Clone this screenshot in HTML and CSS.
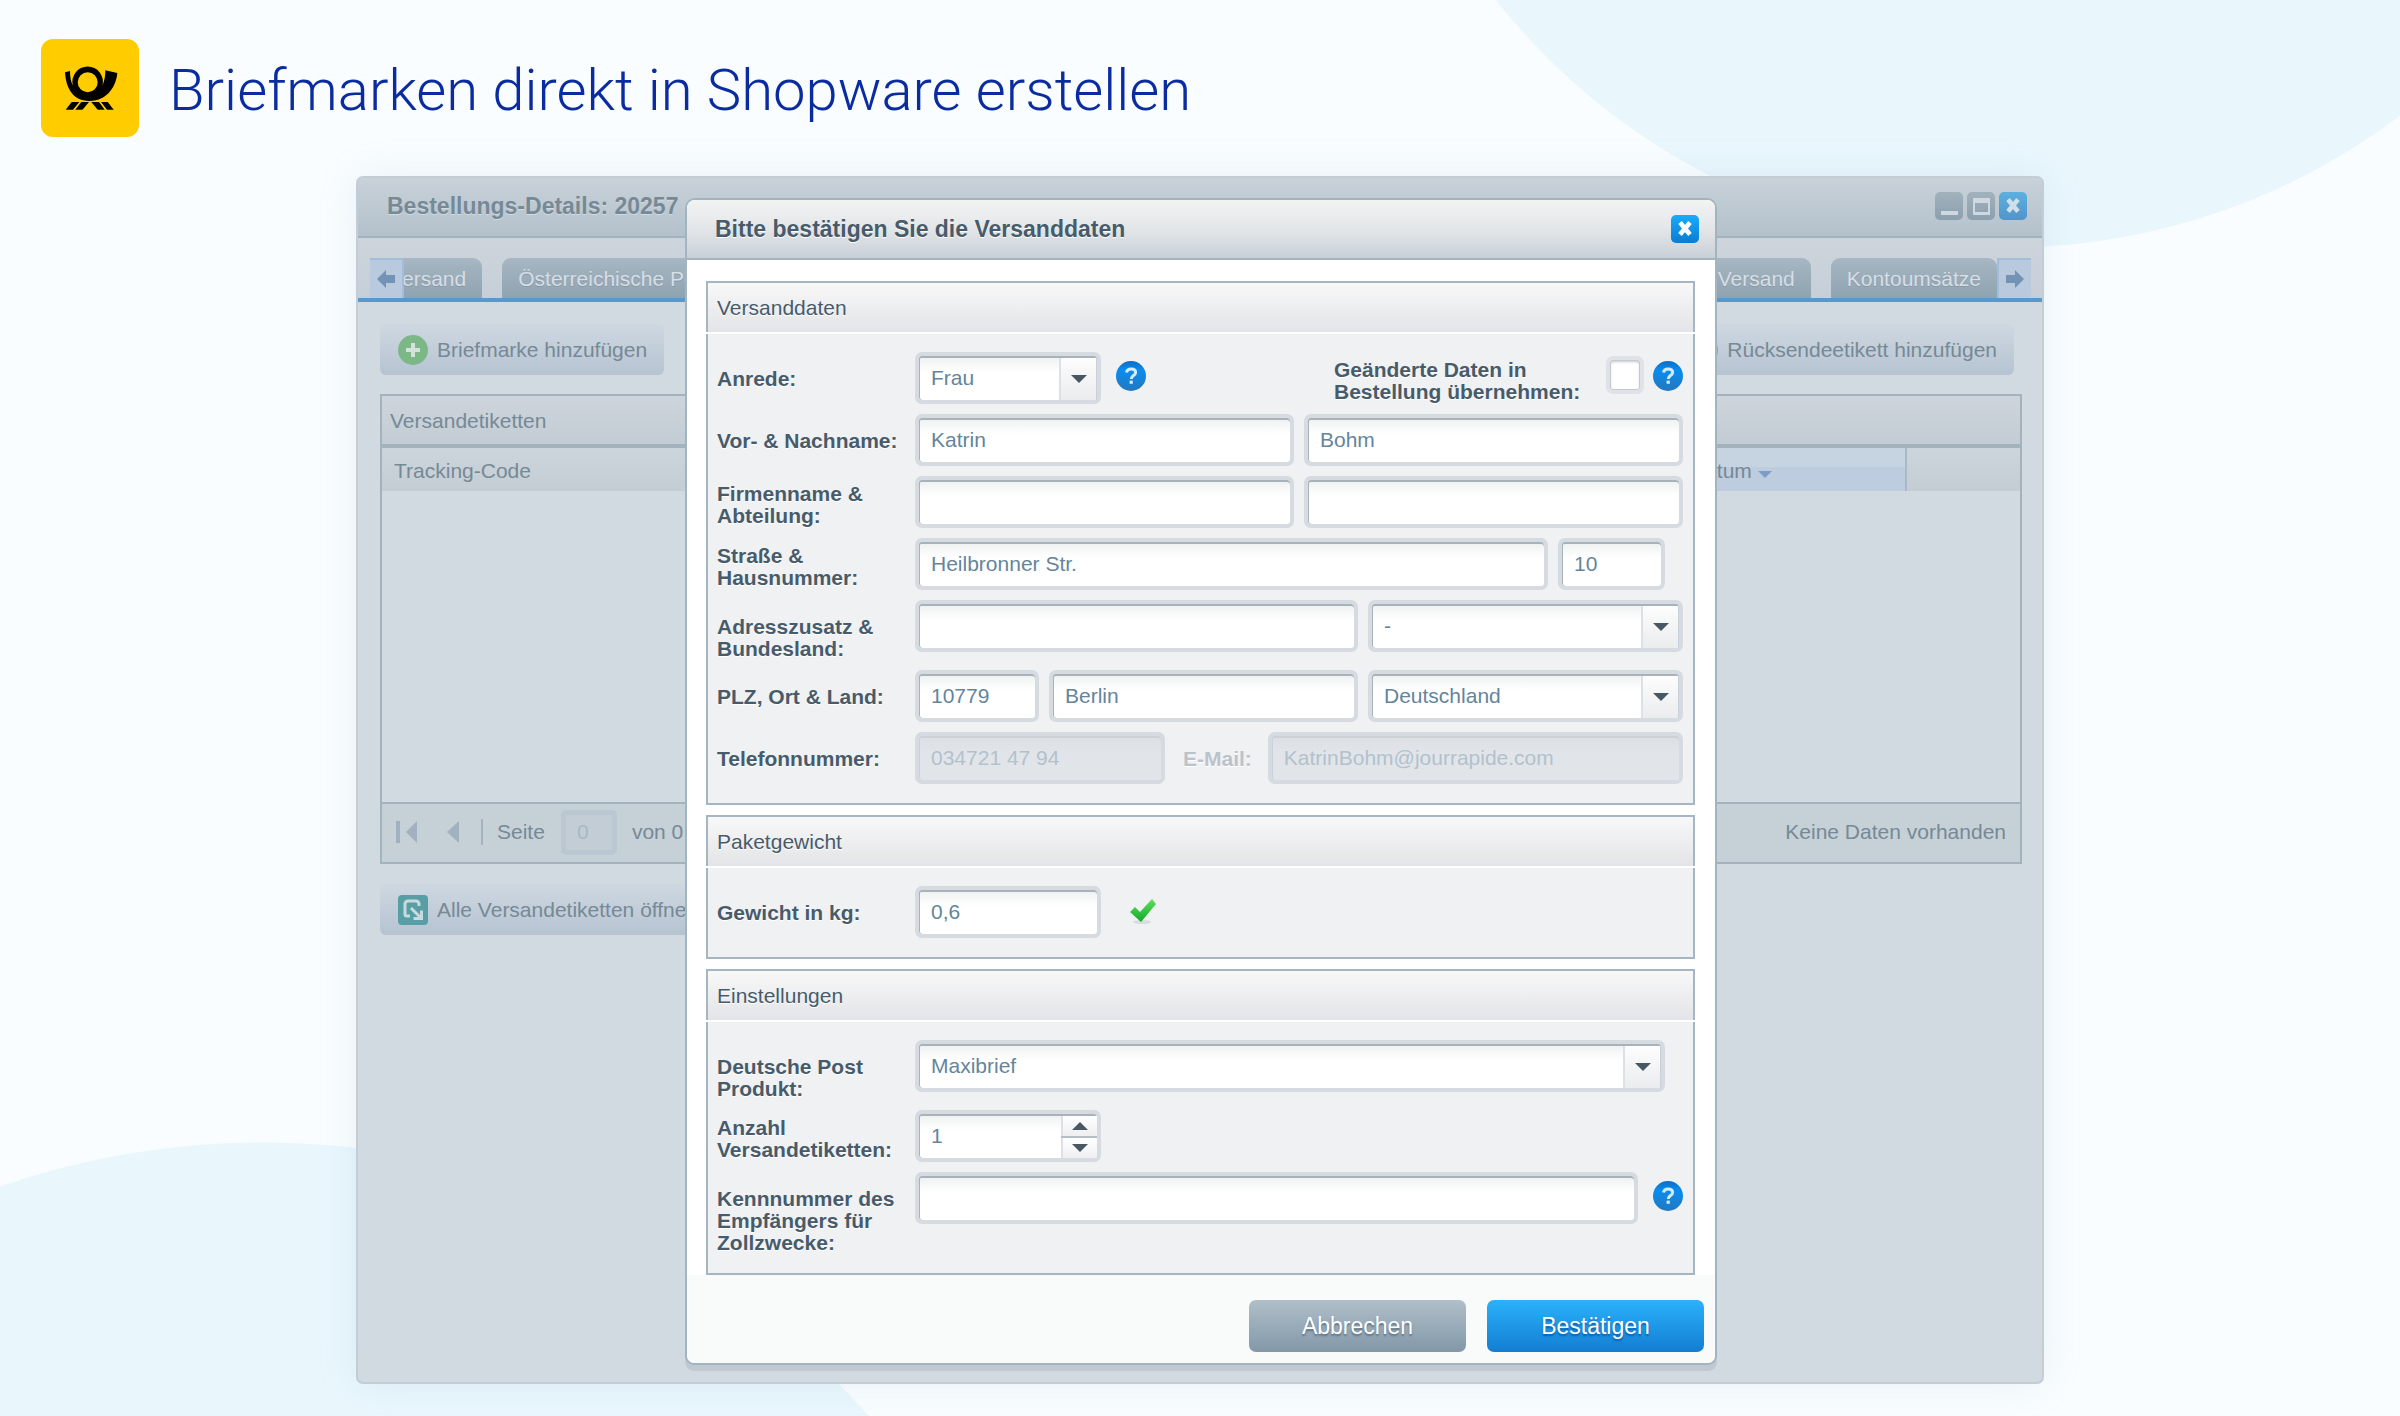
FILE: index.html
```html
<!DOCTYPE html>
<html lang="de">
<head>
<meta charset="utf-8">
<meta name="viewport" content="width=device-width, initial-scale=1">
<title>Briefmarken direkt in Shopware erstellen</title>
<link rel="stylesheet" href="styles.css">
</head>
<body>
<svg class="symbols" aria-hidden="true">
  <defs>
    <linearGradient id="help-fill" x1="0" y1="0" x2="0" y2="1">
      <stop offset="0" stop-color="#0a6dc0"/><stop offset=".3" stop-color="#0a8cf0"/><stop offset="1" stop-color="#2478bd"/>
    </linearGradient>
    <linearGradient id="check-fill" x1="0" y1="0" x2="0" y2="1">
      <stop offset="0" stop-color="#5fe05a"/><stop offset="1" stop-color="#12a82c"/>
    </linearGradient>
  </defs>
  <symbol id="help" viewBox="0 0 30 30">
    <circle cx="15" cy="15" r="15" fill="url(#help-fill)"/>
    <path d="M10.500 11.500c.4-2.600 2.200-3.600 4.600-3.600 2.600 0 4.500 1.200 4.500 3.500 0 3.300-4.400 3-4.400 6.600" fill="none" stroke="#d3ebfb" stroke-width="3"/>
    <rect x="13.600" y="19.600" width="3.200" height="3.200" fill="#d3ebfb"/>
  </symbol>
  <symbol id="down" viewBox="0 0 16 8"><path d="M0 0h16L8 8z" fill="#475764"/></symbol>
  <symbol id="up" viewBox="0 0 16 8"><path d="M0 8h16L8 0z" fill="#475764"/></symbol>
  <symbol id="cross" viewBox="0 0 28 28"><path d="M9 7.500l10 12M19 7.500L9 19.500" fill="none" stroke="currentColor" stroke-width="4.600"/></symbol>
</svg>

<div class="page">
  <header class="brand">
    <svg class="brand-logo" viewBox="0 0 98 98" role="img" aria-label="Deutsche Post">
      <rect width="98" height="98" rx="12" fill="#fc0"/>
      <path fill-rule="evenodd" d="M24 33.300L29 32C29 38 30 43 31.800 46.500A15.300 15.300 0 1 1 61.500 46.500C63.500 42 64.500 36 64.300 31.300L76.300 34C75.500 46 67 62 48.300 62C31 62 25 48 24 33.300ZM46.700 33.300a10 10 0 1 0 0 20a10 10 0 1 0 0-20Z"/>
      <path d="M24.700 70.700L30.700 63H38.300L32 70.700ZM34.300 70.700L40.300 63H48L41.500 70.700ZM50.300 63H58L63.700 70.700H56.700ZM60 63H66.700L72.700 70.700H66Z"/>
    </svg>
    <h1>Briefmarken direkt in Shopware erstellen</h1>
  </header>

  <main class="stage">
    <section class="window" inert>
      <header class="window-head">
        <h2>Bestellungs-Details: 20257</h2>
        <div class="window-tools">
          <button class="tool" aria-label="Minimieren"><svg viewBox="0 0 28 28"><path d="M6 19h17v4H6z" fill="#cfd8e0"/></svg></button>
          <button class="tool" aria-label="Maximieren"><svg viewBox="0 0 28 28"><path fill-rule="evenodd" d="M6 6h17v17H6zM8 11v9h13v-9z" fill="#cfd8e0"/></svg></button>
          <button class="tool tool-close" aria-label="Schließen"><svg><use href="#cross"/></svg></button>
        </div>
      </header>
      <nav class="tabs">
        <button class="tab-scroll" aria-label="Zurück"><svg viewBox="0 0 18 18"><path d="M0 9l9-9v5h9v8H9v5z"/></svg></button>
        <div class="tab-list">
          <button class="tab tab-cut">ersand</button>
          <button class="tab">Österreichische Post</button>
        </div>
        <div class="tab-list tab-list-end">
          <button class="tab">Versand</button>
          <button class="tab">Kontoumsätze</button>
        </div>
        <button class="tab-scroll" aria-label="Weiter"><svg viewBox="0 0 18 18"><path d="M18 9L9 0v5H0v8h9v5z"/></svg></button>
      </nav>
      <div class="window-body">
        <div class="toolbar">
          <button class="action">
            <svg viewBox="0 0 30 30"><circle cx="15" cy="15" r="15" fill="#7cb886"/><path d="M15 8v14M8 15h14" stroke="#d3e2dc" stroke-width="4"/></svg>
            Briefmarke hinzufügen
          </button>
          <button class="action">
            <svg viewBox="0 0 30 30"><circle cx="15" cy="15" r="15" fill="#6badd8"/></svg>
            Rücksendeetikett hinzufügen
          </button>
        </div>
        <div class="grid">
          <h3>Versandetiketten</h3>
          <table>
            <thead>
              <tr>
                <th>Tracking-Code</th>
                <th class="sorted">Datum <svg viewBox="0 0 14 7"><path d="M0 0h14L7 7z"/></svg></th>
                <th class="last"></th>
              </tr>
            </thead>
          </table>
          <div class="pager">
            <button aria-label="Erste Seite"><svg width="22" height="24" viewBox="0 0 22 24"><path d="M0 1h4v22H0zM21 1v22L10 12z"/></svg></button>
            <button class="prev" aria-label="Vorherige Seite"><svg width="12" height="24" viewBox="0 0 12 24"><path d="M12 1v22L0 12z"/></svg></button>
            <span class="pager-line"></span>
            <label for="seite">Seite</label>
            <input id="seite" class="page-input" value="0" disabled>
            <span>von 0</span>
            <span class="pager-info">Keine Daten vorhanden</span>
          </div>
        </div>
        <div class="toolbar">
          <button class="action">
            <svg viewBox="0 0 30 30"><rect width="30" height="30" rx="4" fill="#589fa5"/><path d="M12 21H9a2 2 0 0 1-2-2V9a3 3 0 0 1 3-3h8a3 3 0 0 1 3 3v2M13 13l9 9M23.500 15.500v8h-8" fill="none" stroke="#c9dbe0" stroke-width="3"/></svg>
            Alle Versandetiketten öffnen
          </button>
        </div>
      </div>
    </section>

    <form class="dialog" role="dialog" aria-labelledby="dialog-title">
      <header class="dialog-head">
        <h2 id="dialog-title">Bitte bestätigen Sie die Versanddaten</h2>
        <button type="button" class="tool tool-close" aria-label="Schließen"><svg><use href="#cross"/></svg></button>
      </header>

      <div class="dialog-body">
        <section class="panel">
          <h3>Versanddaten</h3>
          <div class="panel-body">
            <div class="row">
              <label class="name" for="anrede">Anrede:</label>
              <div class="fields">
                <div class="combo combo-short">
                  <select id="anrede"><option>Frau</option><option>Herr</option></select>
                  <span class="trigger"><svg><use href="#down"/></svg></span>
                </div>
                <button type="button" class="help" aria-label="Hilfe zur Anrede"><svg><use href="#help"/></svg></button>
                <label class="apply" for="apply">Geänderte Daten in Bestellung übernehmen:</label>
                <input id="apply" type="checkbox" class="tick">
                <button type="button" class="help help-end" aria-label="Hilfe zu geänderten Daten"><svg><use href="#help"/></svg></button>
              </div>
            </div>
            <div class="row">
              <label class="name" for="vorname">Vor- &amp; Nachname:</label>
              <div class="fields">
                <input id="vorname" class="text" value="Katrin">
                <input class="text" value="Bohm" aria-label="Nachname">
              </div>
            </div>
            <div class="row">
              <label class="name name-middle" for="firma">Firmenname &amp; Abteilung:</label>
              <div class="fields">
                <input id="firma" class="text">
                <input class="text" aria-label="Abteilung">
              </div>
            </div>
            <div class="row">
              <label class="name name-middle" for="strasse">Straße &amp; Hausnummer:</label>
              <div class="fields fields-inset">
                <input id="strasse" class="text" value="Heilbronner Str.">
                <input class="text text-number" value="10" aria-label="Hausnummer">
              </div>
            </div>
            <div class="row">
              <label class="name" for="zusatz">Adresszusatz &amp; Bundesland:</label>
              <div class="fields">
                <input id="zusatz" class="text">
                <div class="combo combo-place">
                  <select aria-label="Bundesland"><option>-</option></select>
                  <span class="trigger"><svg><use href="#down"/></svg></span>
                </div>
              </div>
            </div>
            <div class="row">
              <label class="name" for="plz">PLZ, Ort &amp; Land:</label>
              <div class="fields">
                <input id="plz" class="text text-zip" value="10779">
                <input class="text" value="Berlin" aria-label="Ort">
                <div class="combo combo-place">
                  <select aria-label="Land"><option>Deutschland</option></select>
                  <span class="trigger"><svg><use href="#down"/></svg></span>
                </div>
              </div>
            </div>
            <div class="row">
              <label class="name" for="telefon">Telefonnummer:</label>
              <div class="fields">
                <input id="telefon" class="text text-phone" value="034721 47 94" disabled>
                <label class="mail" for="mail">E-Mail:</label>
                <input id="mail" class="text" value="KatrinBohm@jourrapide.com" disabled>
              </div>
            </div>
          </div>
        </section>

        <section class="panel">
          <h3>Paketgewicht</h3>
          <div class="panel-body">
            <div class="row">
              <label class="name" for="gewicht">Gewicht in kg:</label>
              <div class="fields">
                <input id="gewicht" class="text text-short" value="0,6">
                <svg class="check" viewBox="0 0 28 26" role="img" aria-label="Gültig">
                  <ellipse cx="13" cy="24" rx="9" ry="2" fill="#d9dcdf"/>
                  <path d="M1 14l5-5 5 5L23 1l4 5-15 18z" fill="url(#check-fill)"/>
                </svg>
              </div>
            </div>
          </div>
        </section>

        <section class="panel">
          <h3>Einstellungen</h3>
          <div class="panel-body">
            <div class="row">
              <label class="name" for="produkt">Deutsche Post Produkt:</label>
              <div class="fields fields-inset">
                <div class="combo">
                  <select id="produkt"><option>Maxibrief</option></select>
                  <span class="trigger"><svg><use href="#down"/></svg></span>
                </div>
              </div>
            </div>
            <div class="row">
              <label class="name name-middle" for="anzahl">Anzahl Versandetiketten:</label>
              <div class="fields">
                <div class="combo combo-short">
                  <input id="anzahl" type="number" value="1" min="1">
                  <span class="spin">
                    <button type="button" aria-label="Mehr"><svg><use href="#up"/></svg></button>
                    <button type="button" aria-label="Weniger"><svg><use href="#down"/></svg></button>
                  </span>
                </div>
              </div>
            </div>
            <div class="row">
              <label class="name" for="kennnummer">Kennnummer des Empfängers für Zollzwecke:</label>
              <div class="fields">
                <input id="kennnummer" class="text">
                <button type="button" class="help" aria-label="Hilfe zur Kennnummer"><svg><use href="#help"/></svg></button>
              </div>
            </div>
          </div>
        </section>
      </div>

      <footer class="dialog-foot">
        <button type="button" class="button">Abbrechen</button>
        <button type="submit" class="button button-primary">Bestätigen</button>
      </footer>
    </form>
  </main>
</div>
</body>
</html>
```
FILE: styles.css
```css
* { box-sizing: border-box; }

body {
  margin: 0;
  min-height: 100vh;
  background:
    radial-gradient(circle 652px at calc(100% - 393px) -404px, #e9f7fd 651px, transparent 652px),
    radial-gradient(circle 808px at 263px calc(100% + 534px), #e9f7fd 807px, transparent 808px),
    #f9fdff;
  color: #475b6a;
  font: 21px/22px "Liberation Sans", Arial, sans-serif;
}

button, input, select { font: inherit; color: inherit; }
button { border: 0; padding: 0; background: none; cursor: pointer; }
h1, h2, h3 { margin: 0; font-weight: 400; }
h3 { font-size: 21px; }
svg { display: block; }
.symbols { position: absolute; width: 0; height: 0; }

.page { padding: 39px 41px 32px; }

.brand { display: flex; align-items: center; gap: 30px; margin-bottom: 39px; }
.brand-logo { flex: none; width: 98px; height: 98px; }
.brand h1 {
  padding-top: 3px;
  color: #0a2ca0;
  font: 300 58px/72px Roboto, sans-serif;
}

/* The dialog lies in the same grid cell as the window behind it. */
.stage { display: grid; max-width: 1688px; margin: 0 auto; }
.window, .dialog { grid-area: 1 / 1; }

/* Window in the background */
.window {
  min-width: 0;
  border: 2px solid #c2cdd5;
  border-radius: 7px;
  background: #d1d9e1;
  color: #768996;
  box-shadow: 0 0 40px rgba(130, 160, 190, .14);
}
.window-head {
  display: flex;
  align-items: center;
  justify-content: space-between;
  height: 60px;
  padding: 0 15px 2px 29px;
  border-bottom: 2px solid #a2b3bf;
  background: linear-gradient(#c9d1d9, #b3c1cb);
}
.window-head h2, .dialog-head h2 { font-size: 23px; line-height: 26px; font-weight: 700; }
.window-head h2 { text-shadow: 0 1px 0 #d3dae1; }
.window-tools { display: flex; gap: 4px; }
.tool {
  flex: none;
  width: 28px;
  height: 28px;
  border-radius: 5px;
  background: linear-gradient(#a2b2bd, #8b9fad);
}
.tool svg { width: 28px; height: 28px; }
.tool-close { background: linear-gradient(#19abfb, #0a7cd2); color: #fff; }
.window .tool-close { background: linear-gradient(#5cb0df, #5294ca); color: #d0dfe9; }

.tabs {
  display: flex;
  align-items: flex-end;
  height: 64px;
  padding: 0 11px 0 12px;
  border-bottom: 4px solid #5599cf;
  background: linear-gradient(#cdd4dc, #c6cfd8);
}
.tab-scroll {
  display: grid;
  place-items: center;
  flex: none;
  width: 34px;
  height: 40px;
  border: 2px solid #a2bcdc;
  border-width: 2px 2px 0 0;
  background: #b9cade;
}
.tab-scroll:last-child { border-width: 2px 0 0 2px; }
.tab-scroll svg { width: 18px; height: 18px; fill: #7393b5; }
.tab-list { display: flex; flex: 1; min-width: 0; gap: 20px; overflow: hidden; }
.tab-list-end { justify-content: flex-end; }
.tab {
  flex: none;
  height: 40px;
  padding: 2px 16px 0;
  border-radius: 9px 9px 0 0;
  background: linear-gradient(#a7b7c3, #8fa3b1);
  color: #d7dee5;
  text-shadow: 0 1px 0 #8798a5;
}
.tab-cut { margin-left: -2px; padding-left: 0; border-top-left-radius: 0; }

.window-body { padding: 20px 20px 0 22px; }
.toolbar { display: flex; justify-content: space-between; padding: 2px 8px 0 0; }
.action {
  display: flex;
  align-items: center;
  gap: 9px;
  height: 51px;
  padding: 0 17px 0 18px;
  border-radius: 6px;
  background: linear-gradient(#cfd8e1, #b5c3d1);
}
.action svg { width: 30px; height: 30px; }

.grid { margin: 19px 0 18px; border: 2px solid #a2b3be; }
.grid h3 {
  height: 52px;
  padding: 14px 8px;
  border-bottom: 4px solid #a2b3be;
  background: linear-gradient(#cdd4dc, #c3ccd4);
}
.grid table { width: 100%; border-collapse: collapse; table-layout: fixed; }
.grid th {
  height: 43px;
  padding: 3px 12px 0;
  background: linear-gradient(#cdd5dc, #c4cdd4);
  font-weight: 400;
  text-align: left;
}
.grid th.sorted {
  width: 226px;
  padding-left: 10px;
  border-right: 2px solid #aab9c4;
  background: linear-gradient(#c6d3e0 45%, #bdccde 45%);
}
.grid th.last { width: 114px; }
.grid th svg { display: inline-block; width: 14px; height: 7px; fill: #7b9dc6; }
.pager {
  display: flex;
  align-items: center;
  height: 60px;
  margin-top: 311px;
  padding: 0 14px 2px;
  border-top: 2px solid #a2b3be;
  background: #c6d0d7;
}
.pager svg { fill: #a2b1bf; }
.pager .prev { margin-left: 29px; }
.pager-line { width: 2px; height: 26px; margin: 0 14px 0 22px; background: #a2b3be; }
.page-input {
  width: 56px;
  height: 45px;
  margin: 0 15px 0 16px;
  padding: 0 11px;
  border: 5px solid #bbc8d1;
  border-radius: 5px;
  background: #c3cdd6;
  color: #a9b8c4;
}
.pager-info { margin-left: auto; }

/* Dialog */
.dialog {
  justify-self: center;
  width: 100%;
  max-width: 1032px;
  margin: 22px 0 19px 2px;
  border: 2px solid #a3b4c1;
  border-radius: 10px 10px 9px 9px;
  background: #fff;
  box-shadow: 0 6px 0 #c0c8d1;
}
.dialog-head {
  display: flex;
  align-items: center;
  justify-content: space-between;
  height: 60px;
  padding: 0 16px 0 28px;
  border-bottom: 2px solid #a3b4c1;
  border-radius: 8px 8px 0 0;
  background: linear-gradient(#f2f3f3, #e3e6e8 50%, #c8d0d7);
}
.dialog-head h2 { text-shadow: 0 1px 0 #fff; }
.dialog-body { display: grid; gap: 10px; padding: 21px 20px 0 19px; }

.panel { display: grid; gap: 2px; min-width: 0; text-shadow: 0 1px 0 #fff; }
.panel h3 {
  height: 51px;
  padding: 14px 9px 0;
  border: 2px solid #a5b5c1;
  border-bottom: 0;
  background: linear-gradient(#f8f8f8, #e3e4e7);
}
.panel-body {
  display: grid;
  gap: 10px;
  padding: 18px 10px 19px 9px;
  border: 2px solid #a5b5c1;
  border-top: 0;
  background: #f0f1f3;
}
.row { display: grid; grid-template-columns: 198px minmax(0, 1fr); align-items: start; }
.name { padding: 16px 16px 0 0; font-weight: 700; }
.name-middle { padding-top: 7px; }
.fields { display: flex; gap: 10px; }
.fields-inset { padding-right: 18px; }

.text, .combo {
  flex: 1 1 0;
  min-width: 0;
  height: 52px;
  border: 4px solid #d6dbe1;
  border-radius: 7px;
  background: linear-gradient(#eef0f0, #fff 16px) padding-box;
  color: #64859b;
  box-shadow: inset 0 2px 0 #a8b2ba, inset 1px 0 0 #a8b2ba;
  outline: 0;
}
.text { padding: 0 12px; }
.text:disabled {
  background: linear-gradient(#dbdfe3, #e1e5ea 16px) padding-box;
  color: #b2c1cc;
  box-shadow: inset 0 2px 0 #cbd1d7, inset 1px 0 0 #cbd1d7;
}
.text-number { flex: 0 0 107px; }
.text-zip { flex: 0 0 124px; }
.text-phone { flex: 0 0 250px; }
.text-short, .combo-short { flex: 0 0 186px; }
.combo-place { flex: 0 0 315px; }

.combo { display: flex; }
.combo select, .combo input {
  flex: 1;
  min-width: 0;
  padding: 0 12px;
  border: 0;
  background: none;
  outline: 0;
  appearance: none;
}
.combo input { appearance: textfield; }
.combo input::-webkit-inner-spin-button { appearance: none; margin: 0; }
.trigger {
  display: grid;
  place-items: center;
  width: 38px;
  margin-top: 2px;
  border-left: 2px solid #dde1e6;
  border-right: 1px solid #c8cfd6;
  background: linear-gradient(#fdfdfd, #ebecee);
}
.trigger svg, .spin svg { width: 16px; height: 8px; }
.spin { display: grid; width: 36px; margin-top: 2px; gap: 2px; background: #b4bec7; }
.spin button {
  display: grid;
  place-items: center;
  border-left: 2px solid #dde1e6;
  background: linear-gradient(#fff, #efeff1);
}

.help { flex: none; align-self: flex-start; margin: 9px 0 0 5px; }
.help svg { width: 30px; height: 30px; }
.help-end { margin-left: -1px; }
.apply { width: 250px; margin: 7px 12px 0 auto; font-weight: 700; }
.tick {
  flex: none;
  width: 38px;
  height: 38px;
  margin: 4px 0 0;
  border: 4px solid #dfe2e6;
  border-radius: 7px;
  background: #fff padding-box;
  box-shadow: inset 0 0 0 1px #c3cacf, inset 0 2px 3px #c3cacf;
  appearance: none;
}
.tick:checked { background: #0a7cd2 padding-box; }
.mail { padding: 16px 6px 0 8px; color: #bac3cb; font-weight: 700; }
.check { width: 28px; height: 26px; margin: 12px 0 0 18px; }

.dialog-foot {
  display: flex;
  justify-content: flex-end;
  gap: 21px;
  padding: 25px 11px 11px;
  border-radius: 0 0 8px 8px;
  background: #f9fbfa;
}
.button {
  width: 217px;
  height: 52px;
  border-radius: 7px;
  background: linear-gradient(#b0bfc9, #8298a8);
  color: #fff;
  font-size: 23px;
  text-shadow: 0 2px 2px #5b7081;
}
.button-primary {
  background: linear-gradient(#2bb2fb, #137dd2);
  text-shadow: 0 2px 2px #0b5aa8;
}
```
